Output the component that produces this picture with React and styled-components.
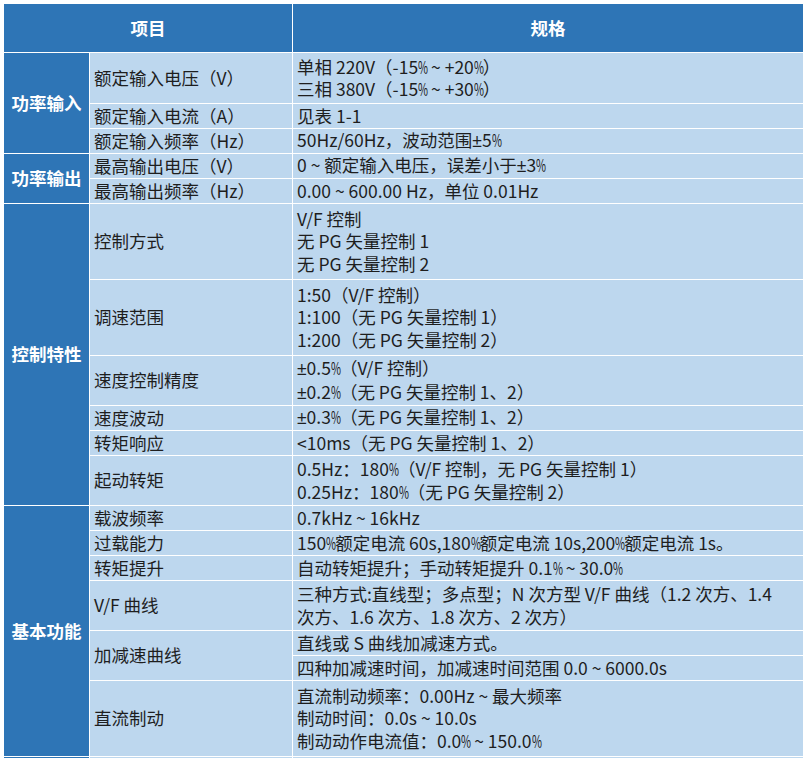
import { createGlobalStyle, styled } from "styled-components";

const specs = [
  {
    group: "功率输入",
    rows: [
      { item: "额定输入电压（V）", h: 50, spec: ["单相 220V（-15% ~ +20%）", "三相 380V（-15% ~ +30%）"] },
      { item: "额定输入电流（A）", h: 24, spec: ["见表 1-1"] },
      { item: "额定输入频率（Hz）", h: 24, spec: ["50Hz/60Hz，波动范围±5%"] },
    ],
  },
  {
    group: "功率输出",
    rows: [
      { item: "最高输出电压（V）", h: 24, spec: ["0 ~ 额定输入电压，误差小于±3%"] },
      { item: "最高输出频率（Hz）", h: 24, spec: ["0.00 ~ 600.00 Hz，单位 0.01Hz"] },
    ],
  },
  {
    group: "控制特性",
    rows: [
      { item: "控制方式", h: 75, spec: ["V/F 控制", "无 PG 矢量控制 1", "无 PG 矢量控制 2"] },
      { item: "调速范围", h: 75, spec: ["1:50（V/F 控制）", "1:100（无 PG 矢量控制 1）", "1:200（无 PG 矢量控制 2）"] },
      { item: "速度控制精度", h: 49, spec: ["±0.5%（V/F 控制）", "±0.2%（无 PG 矢量控制 1、2）"] },
      { item: "速度波动", h: 24, spec: ["±0.3%（无 PG 矢量控制 1、2）"] },
      { item: "转矩响应", h: 24, spec: ["<10ms（无 PG 矢量控制 1、2）"] },
      { item: "起动转矩", h: 49, spec: ["0.5Hz：180%（V/F 控制，无 PG 矢量控制 1）", "0.25Hz：180%（无 PG 矢量控制 2）"] },
    ],
  },
  {
    group: "基本功能",
    rows: [
      { item: "载波频率", h: 24, spec: ["0.7kHz ~ 16kHz"] },
      { item: "过载能力", h: 24, spec: ["150%额定电流 60s,180%额定电流 10s,200%额定电流 1s。"] },
      { item: "转矩提升", h: 24, spec: ["自动转矩提升；手动转矩提升 0.1% ~ 30.0%"] },
      { item: "V/F 曲线", h: 49, spec: ["三种方式:直线型；多点型；N 次方型 V/F 曲线（1.2 次方、1.4", "次方、1.6 次方、1.8 次方、2 次方）"] },
      { item: "加减速曲线", h: 24, split: true, spec: ["直线或 S 曲线加减速方式。"], next: ["四种加减速时间，加减速时间范围 0.0 ~ 6000.0s"] },
      { item: "直流制动", h: 75, spec: ["直流制动频率：0.00Hz ~ 最大频率", "制动时间：0.0s ~ 10.0s", "制动动作电流值：0.0% ~ 150.0%"] },
    ],
  },
];

const Global = createGlobalStyle`
  html, body {
    margin: 0;
    background: #ffffff;
  }
  body {
    font-family: "Noto Sans CJK SC", "Liberation Sans", sans-serif;
  }
`;

const Page = styled.div`
  padding: 3px;
`;

const Table = styled.table`
  table-layout: fixed;
  border-collapse: separate;
  border-spacing: 1px;
  width: 800px;
  background: #ffffff;
  font-size: 17.5px;
  line-height: 22.5px;
`;

const HeadCell = styled.th`
  height: 48px;
  padding: 0;
  background: #2e75b6;
  color: #ffffff;
  font-weight: bold;
  text-align: center;
  vertical-align: middle;
`;

const GroupCell = styled.td`
  padding: 0;
  background: #2e75b6;
  color: #ffffff;
  font-weight: bold;
  text-align: center;
  vertical-align: middle;
`;

const ItemCell = styled.td`
  height: ${(p) => p.$h}px;
  padding: 0 4px;
  background: #bdd7ee;
  color: #1e1e1e;
  vertical-align: middle;
  white-space: nowrap;
`;

const SpecCell = styled(ItemCell)`
  padding-left: 4px;
`;

// the source font sets % narrow, squeeze it to match
const Pct = styled.span`
  display: inline-block;
  width: 9px;
  transform: scaleX(0.62);
  transform-origin: 0 50%;
`;

const PlusMinus = styled.span`
  font-family: "Liberation Sans", sans-serif;
`;

function rich(text) {
  return text.split(/([%±])/).map((p, i) => {
    if (p === "%") return <Pct key={i}>%</Pct>;
    if (p === "±") return <PlusMinus key={i}>±</PlusMinus>;
    return p;
  });
}

function lines(list) {
  return list.map((l, i) => (
    <span key={i}>
      {i > 0 && <br />}
      {rich(l)}
    </span>
  ));
}

export default function App() {
  const body = [];
  specs.forEach((g) => {
    const span = g.rows.reduce((n, r) => n + (r.split ? 2 : 1), 0);
    g.rows.forEach((r, i) => {
      body.push(
        <tr key={g.group + r.item}>
          {i === 0 && <GroupCell rowSpan={span}>{g.group}</GroupCell>}
          <ItemCell $h={r.h} rowSpan={r.split ? 2 : 1}>{r.item}</ItemCell>
          <SpecCell $h={r.h}>{lines(r.spec)}</SpecCell>
        </tr>
      );
      if (r.split) {
        body.push(
          <tr key={g.group + r.item + "-2"}>
            <SpecCell $h={r.h}>{lines(r.next)}</SpecCell>
          </tr>
        );
      }
    });
  });

  return (
    <>
      <Global />
      <Page>
        <Table>
          <colgroup>
            <col style={{ width: 85 }} />
            <col style={{ width: 202 }} />
            <col style={{ width: 510 }} />
          </colgroup>
          <thead>
            <tr>
              <HeadCell colSpan={2}>项目</HeadCell>
              <HeadCell>规格</HeadCell>
            </tr>
          </thead>
          <tbody>
            {body}
            <tr>
              <GroupCell />
              <ItemCell $h={24} />
              <SpecCell $h={24} />
            </tr>
          </tbody>
        </Table>
      </Page>
    </>
  );
}
